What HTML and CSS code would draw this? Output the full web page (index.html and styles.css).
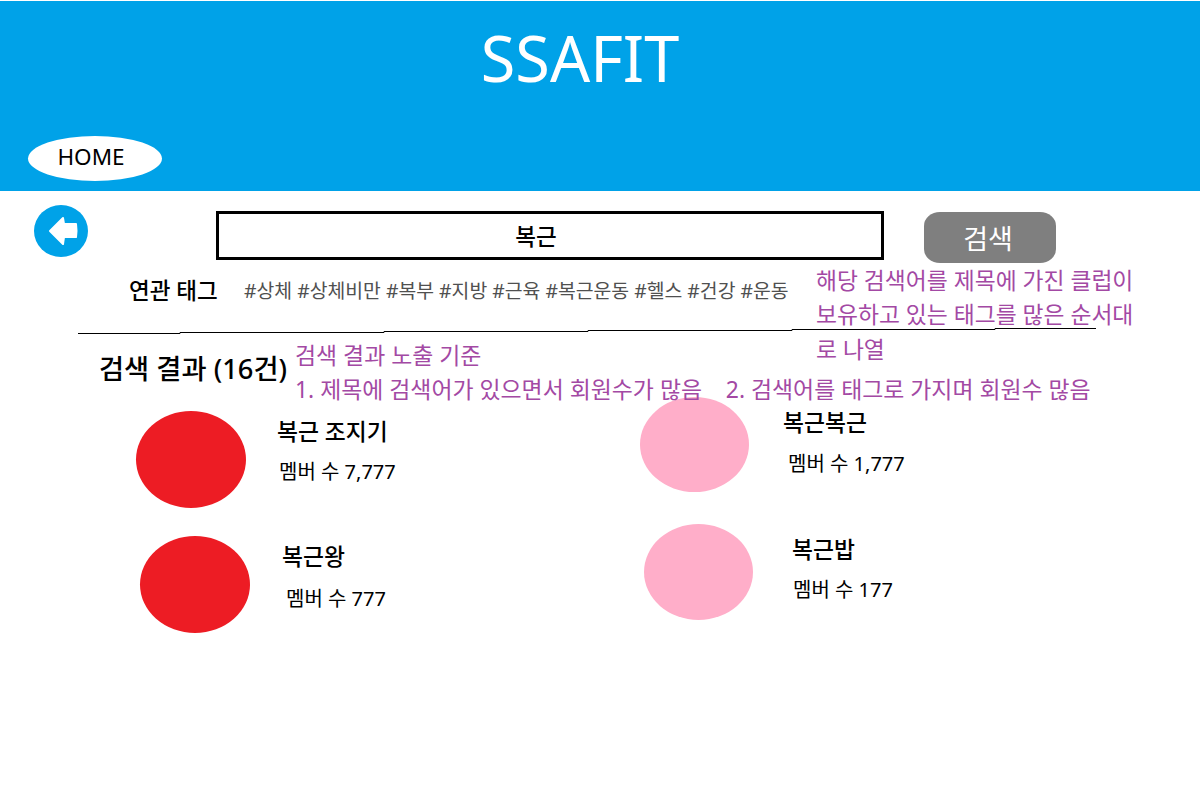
FILE: index.html
```html
<!DOCTYPE html>
<html lang="ko">
<head>
<meta charset="utf-8">
<title>SSAFIT</title>
<link rel="stylesheet" href="styles.css">
</head>
<body>
<div class="page">
  <header class="top">
    <h1 class="brand">SSAFIT</h1>
    <a class="home">HOME</a>
  </header>
  <section class="search-row">
    <svg class="back" width="56" height="54" viewBox="0 0 56 54"><ellipse cx="28" cy="26" rx="27" ry="26" fill="#00a2e8"/><path d="M17 26 L30 13 L31 19 L43 19 Q44 26 43 32 L31 32 L30 39 Z" fill="#fff" stroke="#fff" stroke-width="2" stroke-linejoin="round"/></svg>
    <div class="search-box">복근</div>
    <button class="search-btn">검색</button>
  </section>
  <section class="tag-row">
    <span class="tag-label">연관 태그</span>
    <span class="tags">#상체 #상체비만 #복부 #지방 #근육 #복근운동 #헬스 #건강 #운동</span>
  </section>
  <h2 class="result-title">검색 결과 (16건)</h2>
  <section class="results">
    <div class="col col-a">
      <article class="card card-1"><span class="dot red"></span><div class="info"><h3>복근 조지기</h3><p>멤버 수 7,777</p></div></article>
      <article class="card card-2"><span class="dot red"></span><div class="info"><h3>복근왕</h3><p>멤버 수 777</p></div></article>
    </div>
    <div class="col col-b">
      <article class="card card-3"><span class="dot pink"></span><div class="info"><h3>복근복근</h3><p>멤버 수 1,777</p></div></article>
      <article class="card card-4"><span class="dot pink"></span><div class="info"><h3>복근밥</h3><p>멤버 수 177</p></div></article>
    </div>
  </section>
  <svg class="rule" width="1200" height="10" viewBox="0 0 1200 10"><path d="M78 6.5H180V5.5H384V4.5H588V3.5H792V2.5H995V1.5H1096" fill="none" stroke="#000" stroke-width="1"/></svg>
  <p class="note note-tag">해당 검색어를 제목에 가진 클럽이<br>보유하고 있는 태그를 많은 순서대<br>로 나열</p>
  <p class="note note-result">검색 결과 노출 기준<br>1. 제목에 검색어가 있으면서 회원수가 많음 &nbsp;&nbsp; 2. 검색어를 태그로 가지며 회원수 많음</p>
</div>
</body>
</html>
```
FILE: styles.css
```css
* { box-sizing: border-box; margin: 0; padding: 0; }
html, body { background: #fff; }
body { width: 1200px; height: 800px; overflow: hidden; font-family: "Noto Sans", "Noto Sans CJK KR", sans-serif; color: #000; }
.page { position: relative; width: 1200px; height: 800px; overflow: hidden; }
.top { height: 190px; margin-top: 1px; background: #00a2e8; padding: 18px 0 0 28px; display: flex; flex-direction: column; }
.brand { align-self: center; margin-left: -68px; font: 400 63px/78px "Noto Sans", sans-serif; color: #fff; }
.home { margin-top: 39px; width: 134px; height: 45px; border-radius: 50%; background: #fff; display: flex; align-items: center; justify-content: center; font: 400 22.5px/1 "Noto Sans", sans-serif; padding: 0 8px 2px 0; }
.search-row { display: flex; align-items: flex-start; padding: 14px 0 0 33px; }
.back { flex: none; }
.search-box { margin: 6px 0 0 127px; width: 668px; height: 49px; border: 3px solid #000; display: flex; align-items: center; justify-content: center; font-size: 22.5px; font-weight: 500; padding-right: 28px; }
.search-btn { margin: 7px 0 0 40px; width: 132px; height: 51px; border: 0; border-radius: 16px / 14px; background: #7f7f7f; color: #fff; font: 400 27px/1 "Noto Sans CJK KR", sans-serif; padding-right: 4px; }
.tag-row { display: flex; align-items: center; padding: 7px 0 0 129px; height: 46px; }
.tag-label { font-size: 22.5px; font-weight: 500; width: 116px; flex: none; }
.tags { font-size: 19.37px; color: #505050; white-space: nowrap; margin-left: -1px; }
.result-title { margin: 42px 0 0 99px; font-size: 27.3px; font-weight: 500; line-height: 36px; white-space: nowrap; }
.results { display: flex; }
.col { flex: none; }
.col-a { width: 640px; padding: 24px 0 0 136px; }
.col-b { padding-top: 10px; }
.card { display: flex; align-items: flex-start; }
.dot { flex: none; width: 110px; border-radius: 50%; display: block; }
.red { height: 97px; background: #ed1c24; }
.pink { height: 95px; width: 109px; background: #ffaec9; }
.card-4 .pink { height: 96px; }
.info h3 { font-size: 22.8px; font-weight: 500; line-height: 30px; white-space: nowrap; }
.info p { font-size: 20px; line-height: 28px; white-space: nowrap; }
.card-1 .info { margin: 6px 0 0 31px; }
.card-1 .info p { margin: 11px 0 0 2px; }
.card-2 { margin: 28px 0 0 4px; }
.card-2 .info { margin: 6px 0 0 32px; }
.card-2 .info p { margin: 13px 0 0 4px; }
.card-3 .info { margin: 11px 0 0 34px; }
.card-3 .info p { margin: 12px 0 0 5px; }
.card-4 { margin: 32px 0 0 4px; }
.card-4 .info { margin: 11px 0 0 39px; }
.card-4 .info p { margin: 11px 0 0 1px; }
.rule { position: absolute; left: 0; top: 327px; }
.note { position: absolute; color: #a349a4; white-space: nowrap; }
.note-tag { left: 816px; top: 264px; line-height: 34.4px; font-size: 22.8px; }
.note-result { left: 295px; top: 338.5px; line-height: 34.4px; font-size: 22.9px; }
```
